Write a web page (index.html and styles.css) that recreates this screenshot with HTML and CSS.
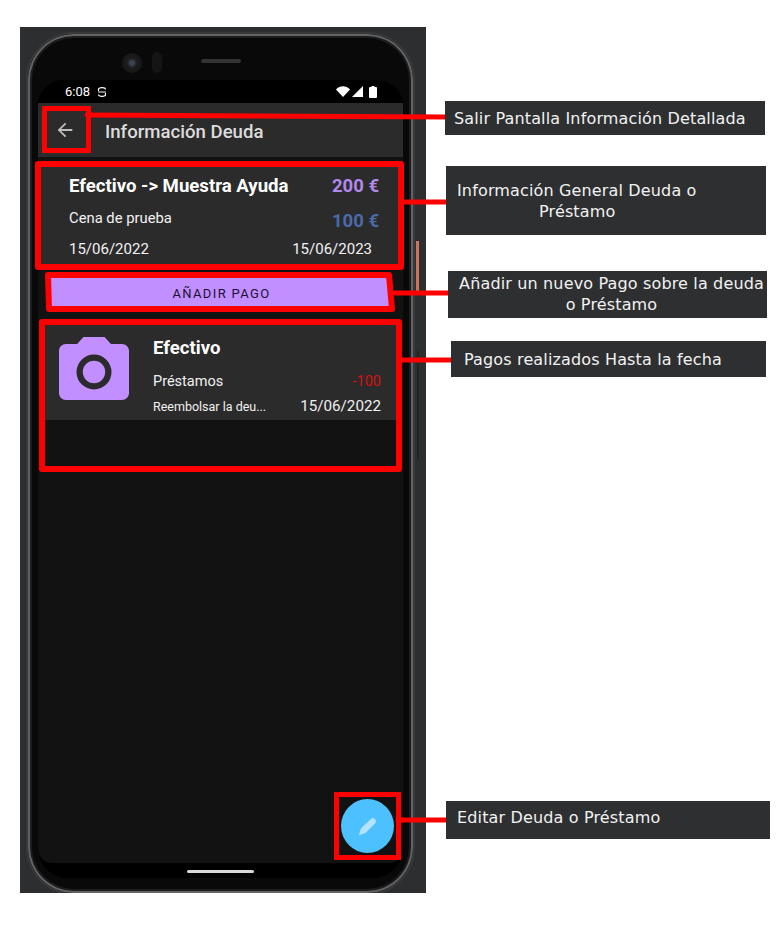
FILE: index.html
```html
<!DOCTYPE html>
<html lang="es">
<head>
<meta charset="utf-8">
<title>Información Deuda</title>
<link rel="stylesheet" href="styles.css">
</head>
<body>
<div class="stage">
  <div class="backdrop">
    <span class="power"></span>
    <span class="volume"></span>
    <div class="phone">
      <div class="bezel">
        <span class="camera"></span>
        <span class="sensor"></span>
        <span class="speaker"></span>
      </div>
      <div class="screen">
        <div class="status">
          <span class="time">6:08</span>
          <svg class="sim" viewBox="0 0 10 12"><path d="M1.500 5V3.500C1.500 1 8.500 1 8.500 3.500M1 6h8M8.500 7v1.500C8.500 11 1.500 11 1.500 8.500" fill="none" stroke="#fff" stroke-width="1.200"/></svg>
          <span class="status-fill"></span>
          <svg class="wifi" viewBox="0 0 14 11"><path d="M0 3.500C4-.7 10-.7 14 3.500L7 11z" fill="#fff"/></svg>
          <svg class="signal" viewBox="0 0 11 11"><path d="M11 0v11H0z" fill="#fff"/></svg>
          <svg class="battery" viewBox="0 0 8 12"><path d="M2.500 0h3v1H7a1 1 0 0 1 1 1v9a1 1 0 0 1-1 1H1a1 1 0 0 1-1-1V2a1 1 0 0 1 1-1h1.500z" fill="#fff"/></svg>
        </div>
        <header class="appbar">
          <svg class="back" viewBox="0 0 24 24"><path d="M20 11H7.830l5.590-5.590L12 4l-8 8 8 8 1.410-1.410L7.830 13H20v-2z" fill="#bdbdbd"/></svg>
          <h1 class="title">Información Deuda</h1>
        </header>
        <main class="content">
          <section class="debt">
            <div class="debt-row debt-top">
              <span class="debt-name">Efectivo -&gt; Muestra Ayuda</span>
              <span class="amount amount-total">200 €</span>
            </div>
            <div class="debt-row debt-mid">
              <span class="debt-note">Cena de prueba</span>
              <span class="amount amount-left">100 €</span>
            </div>
            <div class="debt-row debt-dates">
              <span>15/06/2022</span>
              <span>15/06/2023</span>
            </div>
          </section>
          <button class="add">AÑADIR PAGO</button>
          <section class="payment">
            <svg class="pay-icon" viewBox="0 0 24 24">
              <path d="M9 2L7.170 4H4c-1.100 0-2 .9-2 2v12c0 1.100.9 2 2 2h16c1.100 0 2-.9 2-2V6c0-1.100-.9-2-2-2h-3.170L15 2H9z" fill="#c18fff"/>
              <circle cx="12" cy="12" r="4.100" fill="#c18fff" stroke="#2b2b2b" stroke-width="1.800"/>
            </svg>
            <div class="pay-body">
              <div class="pay-name">Efectivo</div>
              <div class="pay-row pay-cat"><span>Préstamos</span><span class="pay-amount">-100</span></div>
              <div class="pay-row pay-last"><span class="pay-note">Reembolsar la deu...</span><span class="pay-date">15/06/2022</span></div>
            </div>
          </section>
          <button class="fab" aria-label="Editar">
            <svg viewBox="0 0 24 24"><path d="M1 23l2.500-8L15.500 3.500Q18 1.500 20 3.500l.8.8Q22.700 6.500 20.500 9L9 20.500z" fill="#b5e3ff"/></svg>
          </button>
        </main>
        <div class="navbar"><span class="home"></span></div>
      </div>
    </div>
  </div>

  <svg class="marks" viewBox="0 0 780 928">
    <g fill="none" stroke="#ff0000" stroke-linejoin="round" stroke-linecap="round">
      <rect x="44.500" y="108.500" width="44" height="42" stroke-width="5" stroke-linejoin="miter"/>
      <rect x="38" y="164" width="363" height="103" stroke-width="6"/>
      <path d="M48 275H389L392 309H49Z" stroke-width="6"/>
      <rect x="42" y="322" width="357" height="147" stroke-width="6"/>
      <rect x="336.500" y="794.500" width="62" height="63" stroke-width="5" stroke-linejoin="miter"/>
      <path d="M87 115L447 117" stroke-width="5"/>
      <path d="M404 202H449" stroke-width="5"/>
      <path d="M395 293H452" stroke-width="5"/>
      <path d="M400 360H455" stroke-width="5"/>
      <path d="M398 820H451" stroke-width="5"/>
    </g>
  </svg>

  <div class="note note-exit">Salir Pantalla Información Detallada</div>
  <div class="note note-info">Información General Deuda o<br><span class="indent">Préstamo</span></div>
  <div class="note note-add">Añadir un nuevo Pago sobre la deuda<br>o Préstamo</div>
  <div class="note note-paid">Pagos realizados Hasta la fecha</div>
  <div class="note note-edit">Editar Deuda o Préstamo</div>
</div>
</body>
</html>
```

FILE: styles.css
```css
* { box-sizing: border-box; }
html, body { margin: 0; padding: 0; background: #fff; }
.stage { position: relative; width: 780px; height: 928px; overflow: hidden; font-family: Roboto, sans-serif; }

.backdrop { position: absolute; left: 20px; top: 27px; width: 406px; height: 866px; background: #2d2e30; overflow: hidden; }
.power { position: absolute; left: 396px; top: 214px; width: 3px; height: 51px; background: #c9745c; }
.volume { position: absolute; left: 397px; top: 324px; width: 2px; height: 108px; background: #232425; }
.phone { position: absolute; left: 6px; top: 5px; width: 389px; height: 863px; border-radius: 48px; background: #090909; border: 2px solid #38393a; box-shadow: inset 0 0 0 2px #626365, inset 0 0 0 4px #1c1c1d; }
.bezel { position: relative; height: 40px; }
.camera { position: absolute; left: 94px; top: 19px; width: 20px; height: 20px; border-radius: 50%; background: radial-gradient(circle, #3a4350 0 14%, #1c1c1e 34%, #141415 100%); }
.sensor { position: absolute; left: 124px; top: 18px; width: 10px; height: 21px; border-radius: 5px; background: #151516; }
.speaker { position: absolute; left: 173px; top: 25px; width: 40px; height: 4px; border-radius: 2px; background: #333335; }

.screen { position: absolute; left: 10px; top: 46px; width: 365px; height: 798px; border-radius: 26px 26px 30px 30px; overflow: hidden; background: #000; display: flex; flex-direction: column; }
.status { height: 23px; background: #000; display: flex; align-items: center; padding: 0 26px 0 27px; color: #fff; font-size: 13px; }
.time { width: 25px; }
.sim { width: 10px; height: 12px; margin-left: 7px; }
.status-fill { flex: 1; }
.wifi { width: 14px; height: 11px; }
.signal { width: 11px; height: 11px; margin-left: 2px; }
.battery { width: 8px; height: 12px; margin-left: 6px; }

.appbar { height: 54px; background: #2b2b2b; display: flex; align-items: center; padding-left: 16px; }
.back { width: 22px; height: 22px; }
.title { margin: 3px 0 0 29px; font-size: 18.600px; font-weight: 500; color: #dcdcdc; }

.content { position: relative; flex: 1; display: flex; flex-direction: column; min-height: 0; background: #121212; border-radius: 0 0 14px 14px; }
.debt { margin: 6px 3px 0; height: 106px; background: #2b2b2b; padding: 8px 21px 0 28px; color: #f2f2f2; }
.debt-row { display: flex; justify-content: space-between; align-items: center; }
.debt-top { height: 30px; }
.debt-mid { height: 34px; padding-top: 6px; }
.debt-dates { height: 27px; padding-right: 7px; font-size: 15px; }
.debt-name { font-size: 18.600px; font-weight: 700; color: #fff; }
.debt-note { font-size: 14.800px; position: relative; top: -3px; }
.amount { font-size: 18.500px; font-weight: 700; }
.amount-total { color: #b388eb; }
.amount-left { color: #4a6aa8; }

.add { margin: 9px 11px 0 13px; height: 29px; border: 0; padding: 1px 0 0; background: #c18fff; font: 400 13px Roboto, sans-serif; letter-spacing: 1.350px; color: #1a1030; }

.payment { margin: 18px 6px 0 7px; height: 95px; background: #2b2b2b; display: flex; }
.pay-icon { width: 84px; height: 84px; margin: 5px 0 0 7px; flex: none; }
.pay-body { flex: 1; margin-left: 17px; padding: 10px 16px 0 0; color: #f0f0f0; }
.pay-name { font-size: 18.600px; font-weight: 700; color: #fff; height: 26px; line-height: 26px; }
.pay-row { display: flex; justify-content: space-between; align-items: center; }
.pay-cat { margin-top: 7px; height: 26px; font-size: 14.500px; }
.pay-last { height: 24px; }
.pay-amount { color: #d81010; }
.pay-note { font-size: 12.500px; }
.pay-date { font-size: 15.200px; }

.fab { position: absolute; left: 303px; top: 642px; width: 53px; height: 54px; border: 0; border-radius: 50%; background: #4dc0ff; padding: 0; display: flex; align-items: center; justify-content: center; }
.fab svg { width: 20px; height: 20px; }

.navbar { height: 15px; background: #000; display: flex; justify-content: center; padding-top: 7px; }
.home { width: 67px; height: 3px; border-radius: 2px; background: #d8d8d8; }

.marks { position: absolute; left: 0; top: 0; width: 780px; height: 928px; pointer-events: none; }

.note { position: absolute; background: #2e2f31; color: #f2f2f2; font-family: "DejaVu Sans", sans-serif; font-size: 16px; letter-spacing: .15px; line-height: 21px; white-space: nowrap; }
.note-exit { left: 445px; top: 101px; width: 320px; height: 34px; padding: 7px 0 0 9px; }
.note-info { left: 446px; top: 166px; width: 320px; height: 69px; padding: 14px 0 0 11px; }
.indent { margin-left: 82px; }
.note-add { left: 448px; top: 271px; width: 319px; height: 47px; padding: 2px 0 0 8px; text-align: center; }
.note-paid { left: 451px; top: 341px; width: 315px; height: 36px; padding: 8px 0 0 13px; }
.note-edit { left: 446px; top: 801px; width: 324px; height: 38px; padding: 6px 0 0 11px; }
```
